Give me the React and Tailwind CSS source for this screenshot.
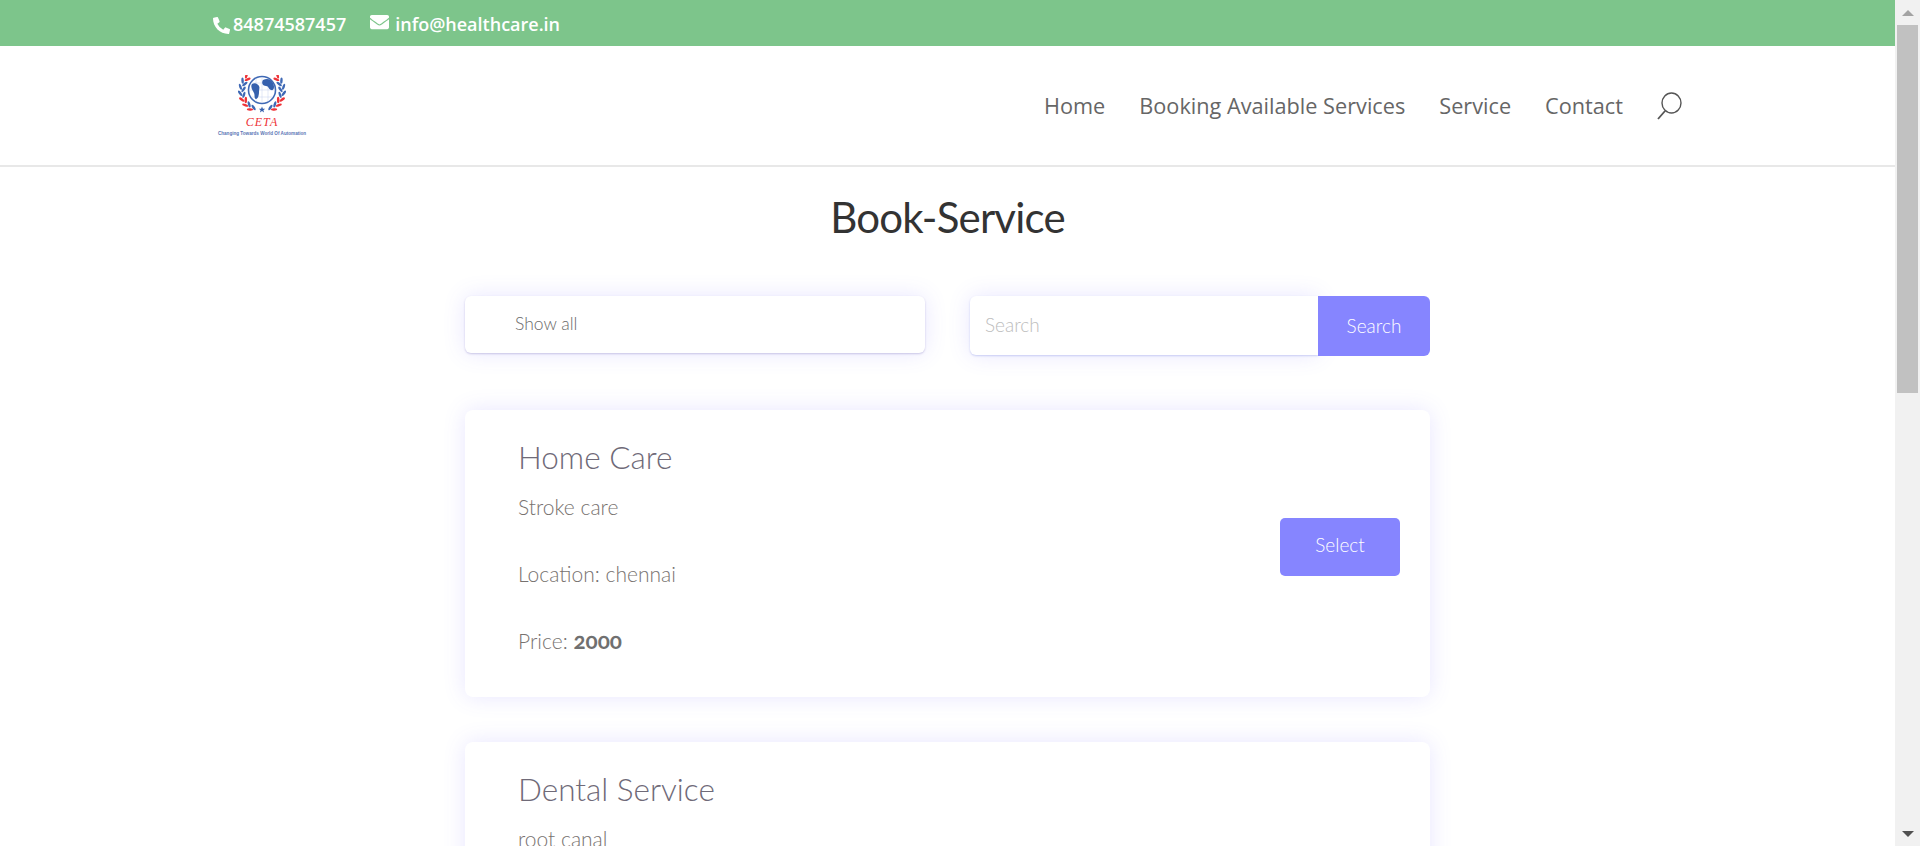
import { FaPhoneAlt, FaEnvelope } from "react-icons/fa";

const services = [
  { title: "Home Care", detail: "Stroke care", location: "chennai", price: "2000" },
  { title: "Dental Service", detail: "root canal", location: "chennai", price: "1500" },
];

// laurel leaves around the globe: [angle on the ring, colour]
const laurel = [
  [45, "#ee3338"], [62, "#3f69b5"], [79, "#3f69b5"], [96, "#3f69b5"], [113, "#ee3338"], [130, "#ee3338"], [147, "#ee3338"],
];

function Leaf({ angle, side, offset, color }) {
  const rad = (angle * Math.PI) / 180;
  const r = 20 + offset;
  const x = 24 + side * r * Math.sin(rad);
  const y = 16 - r * Math.cos(rad);
  const base = 180 - angle + (offset > 0 ? -30 : 30);
  const rot = side === -1 ? base : -base;
  return <ellipse cx={x} cy={y} rx="3.2" ry="1.25" fill={color} transform={`rotate(${rot} ${x} ${y})`} />;
}

function Logo() {
  return (
    <div className="flex w-[94px] flex-col items-center">
      <svg width="48" height="38" viewBox="0 0 48 38" className="blur-[0.3px]">
        <circle cx="24" cy="15" r="13.5" fill="#fff" stroke="#3f69b5" strokeWidth="1.6" />
        <path d="M11 15h26M24 2v26M13.5 8h21M13.5 22h21M18 3.5v23M30 3.5v23" stroke="#c5d3ec" strokeWidth="0.5" />
        <path d="M25 5c4-2 8-1 10 3s1 8-2 7-2-4-5-4-5-3-3-6z" fill="#3560ad" />
        <path d="M14 9c3-2 6 0 7 2s0 3 0 6-1 7-3 7-1-4-2-6-4-6-2-9z" fill="#3560ad" />
        {laurel.map(([angle, color]) => (
          <g key={angle}>
            <Leaf angle={angle} side={-1} offset={2} color={color} />
            <Leaf angle={angle + 6} side={-1} offset={-1.5} color={angle > 120 ? "#3f69b5" : color} />
            <Leaf angle={angle} side={1} offset={2} color={color} />
            <Leaf angle={angle + 6} side={1} offset={-1.5} color={angle > 120 ? "#3f69b5" : color} />
          </g>
        ))}
        <path d="M24 31.5l.9 2.2 2.3.1-1.8 1.4.7 2.2-2.1-1.3-2.1 1.3.7-2.2-1.8-1.4 2.3-.1z" fill="#3560ad" />
      </svg>
      <span className="mt-[4px] font-['Liberation_Serif',serif] text-[12px] leading-[11px] tracking-[1px] text-[#ee3338] italic">CETA</span>
      <span className="mt-[3px] font-['Liberation_Sans',sans-serif] text-[4.6px] leading-[6px] font-bold whitespace-nowrap text-[#5a75b5]">Changing Towards World Of Automation</span>
    </div>
  );
}

function SearchIcon() {
  return (
    <svg width="28" height="28" viewBox="0 0 28 28" fill="none" stroke="#555" strokeWidth="1.4">
      <ellipse cx="16.5" cy="11" rx="9.5" ry="10" />
      <path d="M10 19L3 27" strokeWidth="1.8" />
    </svg>
  );
}

function ServiceCard({ service }) {
  return (
    <div className="flex h-[287px] shrink-0 items-center justify-between rounded-[8px] bg-white pr-[30px] pl-[53px] shadow-[0_0_22px_rgba(100,90,255,0.15)]">
      <div className="self-start pt-[27px]">
        <h2 className="text-[31.5px] leading-[40px] font-light text-[#6f6a78]">{service.title}</h2>
        <p className="mt-[15px] text-[21px] leading-[30px] font-light text-[#77726f]">{service.detail}</p>
        <p className="mt-[37px] text-[21px] leading-[30px] font-light text-[#77726f]">Location: {service.location}</p>
        <p className="mt-[37px] text-[21px] leading-[30px] font-light text-[#77726f]">
          Price: <span className="text-[22.5px] font-bold text-[#707070] oldstyle-nums">{service.price}</span>
        </p>
      </div>
      <button className="mb-[14px] h-[58px] w-[120px] rounded-[5px] bg-[#8685ff] pb-[2px] text-[19px] font-light text-white">Select</button>
    </div>
  );
}

export default function App() {
  return (
    <div className="flex h-screen overflow-hidden bg-white font-['Lato',sans-serif]">
      <div className="min-w-0 flex-1">
        {/* Top bar */}
        <div className="flex h-[46px] items-center bg-[#7dc58b] pt-[2px] pl-[213px] font-['Open_Sans',sans-serif] text-[18px] font-semibold text-white">
          <FaPhoneAlt className="mt-[2px] mr-[3px] h-[17px] w-[17px]" />
          <span>84874587457</span>
          <FaEnvelope className="mt-[-4px] mr-[6px] ml-[24px] h-[20px] w-[19px]" />
          <span>info@healthcare.in</span>
        </div>

        {/* Header */}
        <header className="flex h-[121px] items-center justify-between border-b-2 border-[#e8e8e8] pr-[212px] pl-[215px]">
          <div>
            <Logo />
          </div>
          <nav className="flex items-center pt-[2px] font-['Open_Sans',sans-serif] text-[21.7px] font-medium text-[#666]">
            <a className="mr-[34px]">Home</a>
            <a className="mr-[34px]">Booking Available Services</a>
            <a className="mr-[34px]">Service</a>
            <a className="mr-[32px]">Contact</a>
            <SearchIcon />
          </nav>
        </header>

        <main className="flex flex-col items-center">
          <h1 className="mt-[20px] text-[42px] leading-[60px] font-normal tracking-[-0.8px] text-[#333]">Book-Service</h1>

          <div className="mt-[49px] flex w-[965px] items-start justify-between">
            <div className="flex h-[57px] w-[460px] items-center rounded-[6px] bg-white pl-[50px] text-[17.5px] font-light text-[#6b6b6b] shadow-[0_1px_2px_rgba(70,60,160,0.25),0_0_22px_rgba(100,90,255,0.15)]">
              Show all
            </div>
            <div className="flex w-[460px] items-start">
              <div className="flex h-[59px] flex-1 items-center rounded-l-[6px] bg-white pl-[15px] text-[19px] font-light text-[#bdbdbd] shadow-[0_1px_2px_rgba(70,90,210,0.25),0_0_22px_rgba(100,90,255,0.15)]">
                Search
              </div>
              <button className="relative h-[60px] w-[112px] rounded-r-[6px] bg-[#8685ff] text-[19px] font-light text-white">Search</button>
            </div>
          </div>

          <div className="mt-[54px] flex w-[965px] flex-col gap-[45px]">
            {services.map((s) => (
              <ServiceCard key={s.title} service={s} />
            ))}
          </div>
        </main>
      </div>

      {/* Scrollbar */}
      <div className="flex w-[25px] shrink-0 flex-col bg-[#f1f1f1]">
        <div className="flex h-[25px] w-full shrink-0 items-center justify-center">
          <div className="h-0 w-0 border-x-[6px] border-b-[6px] border-x-transparent border-b-[#a3a3a3]" />
        </div>
        <div className="h-[368px] w-full shrink-0 pl-[2px]">
          <div className="h-full w-[21px] bg-[#c1c1c1]" />
        </div>
        <div className="mt-auto flex h-[25px] w-full shrink-0 items-center justify-center">
          <div className="h-0 w-0 border-x-[6px] border-t-[6px] border-x-transparent border-t-[#505050]" />
        </div>
      </div>
    </div>
  );
}
